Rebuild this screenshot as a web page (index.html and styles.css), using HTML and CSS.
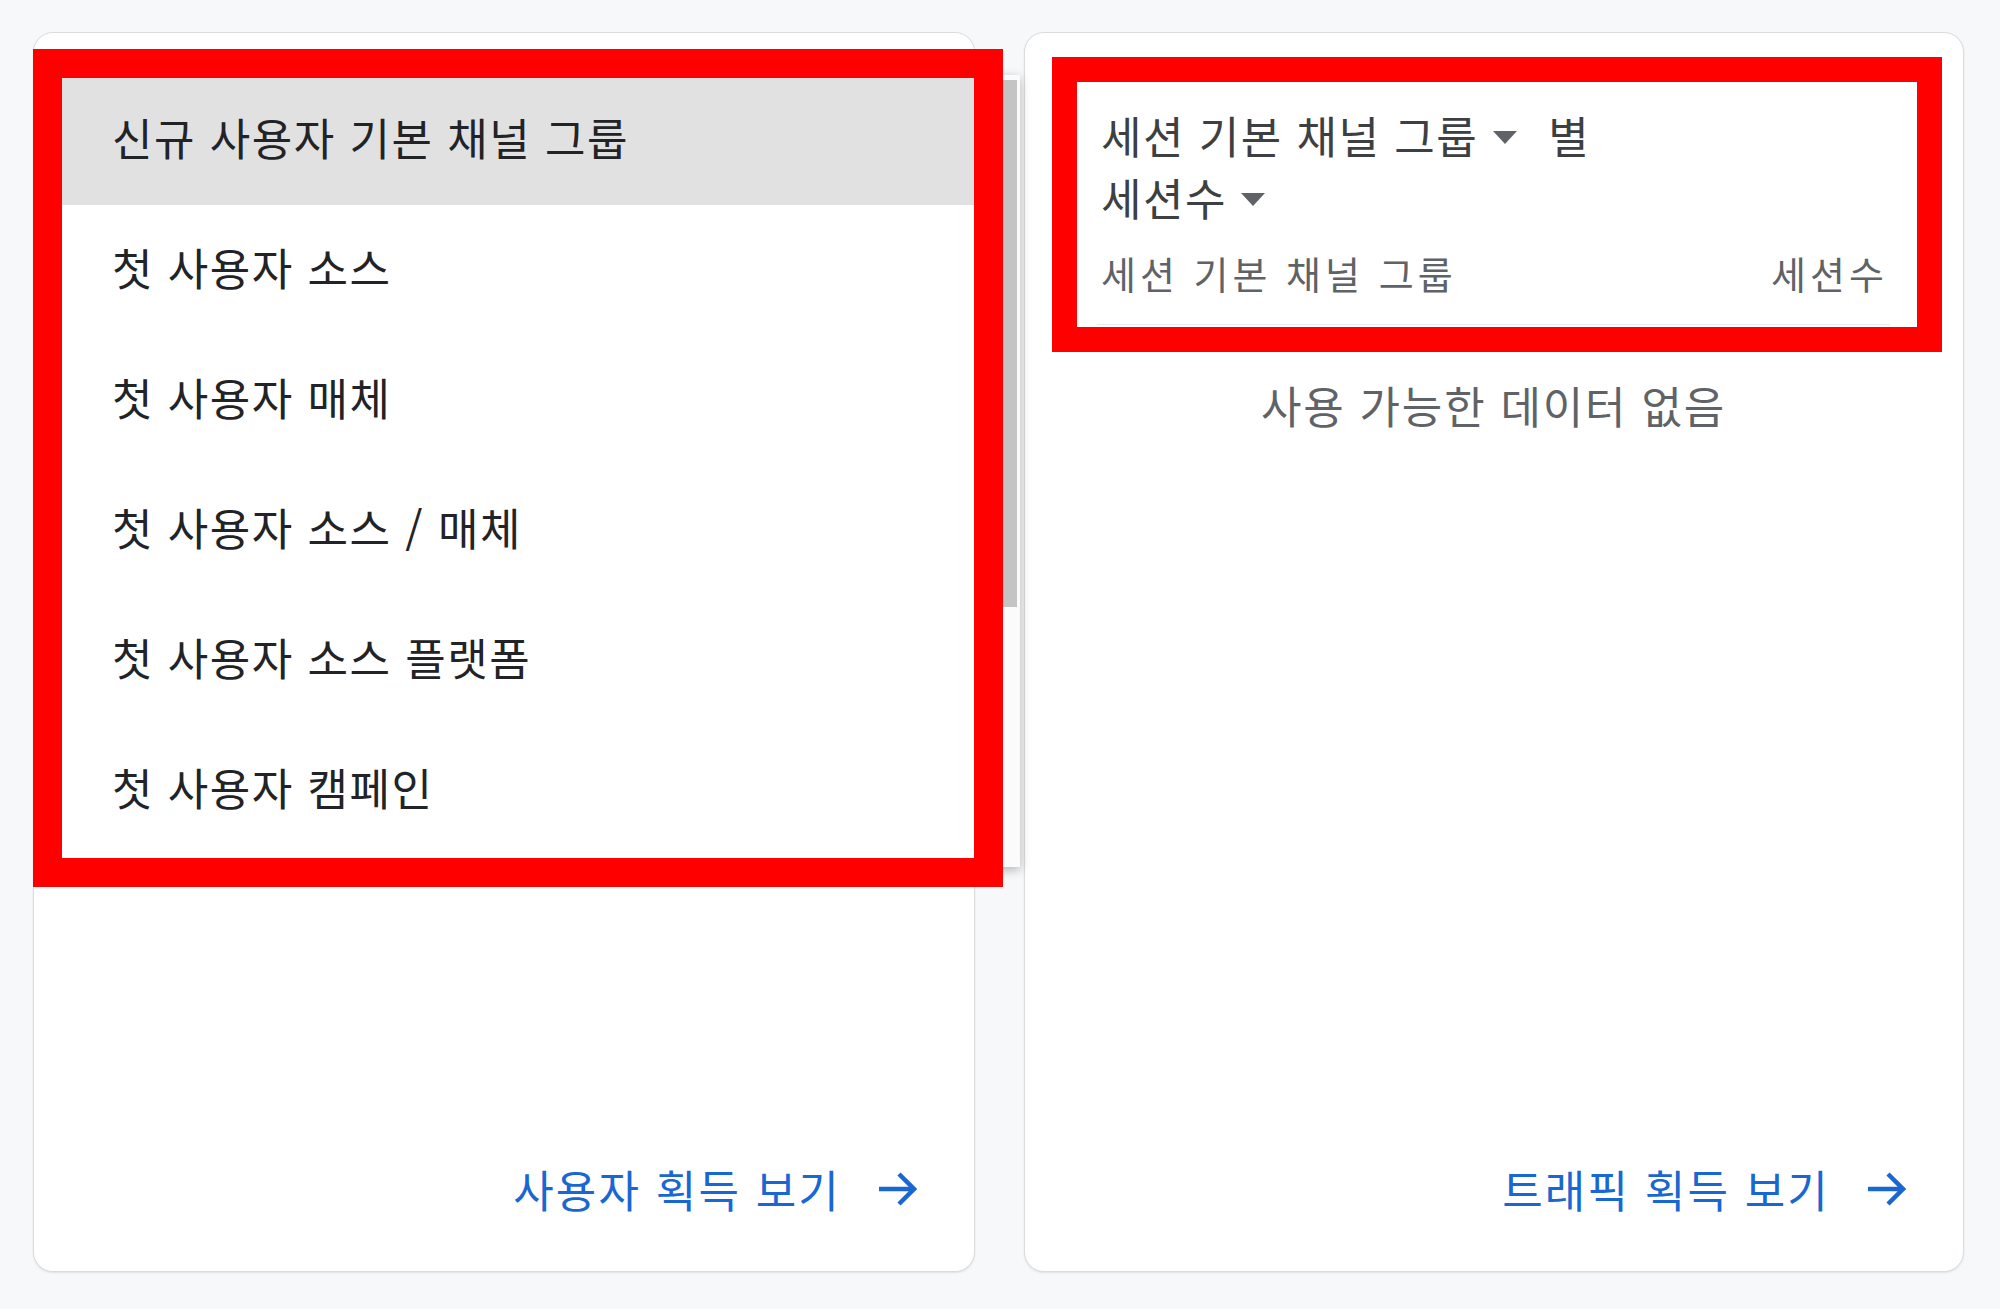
FILE: index.html
```html
<!DOCTYPE html>
<html lang="ko">
<head>
<meta charset="utf-8">
<title>Acquisition cards</title>
<link rel="stylesheet" href="styles.css">
</head>
<body>
<div class="page">
  <section class="card card-left">
    <div class="card-body"></div>
    <div class="card-footer">
      <span class="link">사용자 획득 보기</span>
      <svg class="arrow" viewBox="0 0 40 36" width="40" height="36"><path d="M2 18H37M22 3L37 18L22 33" fill="none" stroke="#1967d2" stroke-width="4.5"/></svg>
    </div>
    <div class="menu">
      <ul class="menu-list">
        <li class="menu-item selected">신규 사용자 기본 채널 그룹</li>
        <li class="menu-item">첫 사용자 소스</li>
        <li class="menu-item">첫 사용자 매체</li>
        <li class="menu-item">첫 사용자 소스 / 매체</li>
        <li class="menu-item">첫 사용자 소스 플랫폼</li>
        <li class="menu-item">첫 사용자 캠페인</li>
      </ul>
      <div class="scrollbar"><div class="thumb"></div></div>
    </div>
  </section>
  <section class="card card-right">
    <div class="card-body">
      <div class="title">
        <div class="title-row"><span>세션 기본 채널 그룹</span><span class="caret caret-1"></span><span>별</span></div>
        <div class="title-row"><span>세션수</span><span class="caret caret-2"></span></div>
      </div>
      <div class="table-head"><span>세션 기본 채널 그룹</span><span>세션수</span></div>
      <div class="empty">사용 가능한 데이터 없음</div>
    </div>
    <div class="card-footer">
      <span class="link">트래픽 획득 보기</span>
      <svg class="arrow" viewBox="0 0 40 36" width="40" height="36"><path d="M2 18H37M22 3L37 18L22 33" fill="none" stroke="#1967d2" stroke-width="4.5"/></svg>
    </div>
  </section>
</div>
<div class="mark mark-left"></div>
<div class="mark mark-right"></div>
</body>
</html>
```

FILE: styles.css
```css
html, body {
  margin: 0;
  padding: 0;
}
body {
  background: #f7f8fa;
  font-family: "Noto Sans CJK KR", "Noto Sans", sans-serif;
  width: 2000px;
  height: 1309px;
  overflow: hidden;
  position: relative;
}
.page {
  display: flex;
  gap: 49px;
  padding: 32px 36px 0 33px;
}
.card {
  position: relative;
  box-sizing: border-box;
  height: 1240px;
  background: #fff;
  border: 1px solid #dadce0;
  border-radius: 20px;
  box-shadow: 0 1px 2px rgba(60, 64, 67, 0.12);
  display: flex;
  flex-direction: column;
}
.card-left { width: 942px; }
.card-right { width: 940px; }
.card-body {
  flex: 1;
}
.card-footer {
  display: flex;
  justify-content: flex-end;
  align-items: center;
  gap: 36px;
  padding: 0 57px 60px 0;
}
.link {
  font-size: 44px;
  line-height: 44px;
  letter-spacing: 2.2px;
  color: #1967d2;
}
.arrow { display: block; }

/* dropdown menu */
.menu {
  position: absolute;
  left: 14px;
  top: 42px;
  width: 972px;
  height: 792px;
  background: #fff;
  box-shadow: 0 3px 10px rgba(0, 0, 0, 0.28);
  display: flex;
  overflow: hidden;
  z-index: 2;
}
.menu-list {
  list-style: none;
  margin: 0;
  padding: 0;
  flex: 1;
}
.menu-item {
  height: 130px;
  line-height: 124px;
  padding-left: 64px;
  font-size: 44px;
  letter-spacing: 1.5px;
  color: #222326;
}
.menu-item.selected {
  background: #e1e1e1;
}
.scrollbar {
  width: 17px;
  background: #fbfbfb;
  padding-top: 5px;
}
.thumb {
  width: 14px;
  height: 527px;
  background: #c4c4c4;
}

/* right card */
.card-right .card-body {
  padding: 71px 73px 0 72px;
}
.title {
  padding-left: 4px;
  color: #3c4043;
  font-size: 44px;
  letter-spacing: 1.5px;
}
.title-row {
  display: flex;
  align-items: center;
  height: 62px;
  line-height: 62px;
}
.caret {
  width: 0;
  height: 0;
  border-left: 12px solid transparent;
  border-right: 12px solid transparent;
  border-top: 13px solid #5f6368;
}
.caret-1 { margin: 4px 31px 0 15px; }
.caret-2 { margin: 4px 0 0 14px; }
.table-head {
  display: flex;
  justify-content: space-between;
  margin-top: 20px;
  padding: 0 2px 26px 4px;
  border-bottom: 1px solid #e8eaed;
  font-size: 38px;
  line-height: 50px;
  letter-spacing: 4px;
  color: #5f6368;
}
.empty {
  margin-top: 55px;
  text-align: center;
  font-size: 44px;
  line-height: 50px;
  letter-spacing: 1.8px;
  color: #5f6368;
}

/* red annotation boxes */
.mark {
  position: absolute;
  box-sizing: border-box;
  border-style: solid;
  border-color: #ff0000;
  z-index: 5;
}
.mark-left {
  left: 33px;
  top: 49px;
  width: 970px;
  height: 838px;
  border-width: 29px;
}
.mark-right {
  left: 1052px;
  top: 57px;
  width: 890px;
  height: 295px;
  border-width: 25px;
}
```
